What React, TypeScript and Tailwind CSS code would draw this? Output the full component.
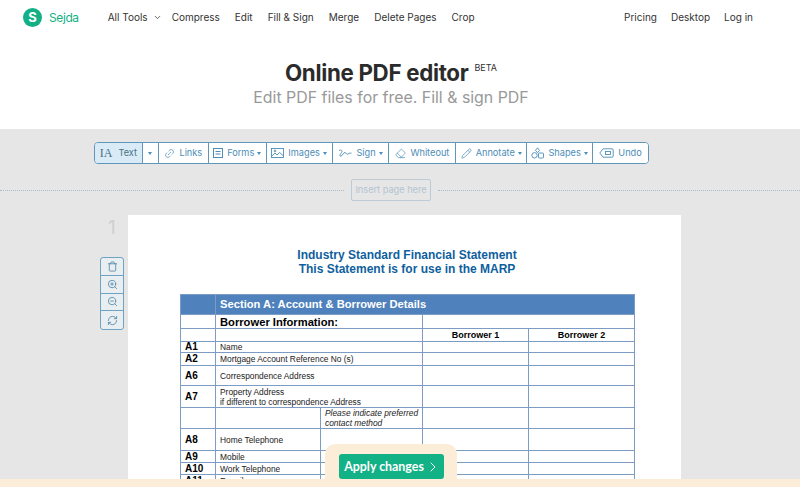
import { ChevronDown, ChevronRight, Eraser, Link2, Pencil, RefreshCw, Trash, ZoomIn, ZoomOut } from 'lucide-react'

const navLinks = ['Compress', 'Edit', 'Fill & Sign', 'Merge', 'Delete Pages', 'Crop']

function Caret() {
  return <span className="ml-[3px] inline-block h-0 w-0 border-x-[2.5px] border-t-[3px] border-x-transparent border-t-current align-middle" />
}

function ToolButton({ w, children, active }: { w: string; children: React.ReactNode; active?: boolean }) {
  return (
    <div className={`flex h-full items-center justify-center gap-[4px] border-r border-[#5f97ba] last:border-r-0 ${w} ${active ? 'bg-[#d9ebf6] text-[#4a6f86]' : 'bg-white text-[#4c8db8]'}`}>
      {children}
    </div>
  )
}

function FormsIcon() {
  return (
    <svg viewBox="0 0 10 10" className="h-[10px] w-[10px]" fill="none" stroke="currentColor" strokeWidth="1">
      <rect x="0.5" y="0.5" width="9" height="9" />
      <path d="M2.5 3.5h5M2.5 6h5" />
    </svg>
  )
}

function ImagesIcon() {
  return (
    <svg viewBox="0 0 13 10" className="h-[10px] w-[13px]" fill="none" stroke="currentColor" strokeWidth="0.9">
      <rect x="0.5" y="0.5" width="12" height="9" />
      <path d="M1 8l3-3 2 2 2.5-2.5L12 7.5" />
      <circle cx="4" cy="3" r="0.9" />
    </svg>
  )
}

function SignIcon() {
  return (
    <svg viewBox="0 0 14 9" className="h-[9px] w-[14px]" fill="none" stroke="currentColor" strokeWidth="0.9">
      <path d="M1 1.5C3 .5 5 1.5 3.5 3.5S1 7.5 3 7c2-.5 2.500-4 4-3.500S8.500 6 10 5s2-1 3.500-.8" />
    </svg>
  )
}

function ShapesIcon() {
  return (
    <svg viewBox="0 0 13 12" className="h-[12px] w-[13px]" fill="none" stroke="currentColor" strokeWidth="0.9">
      <path d="M6.500 .8l2 2.600-2 2.300-2-2.300z" />
      <circle cx="3.500" cy="8.300" r="2.700" />
      <rect x="7.500" y="6" width="5" height="5" rx="0.8" />
    </svg>
  )
}

function UndoIcon() {
  return (
    <svg viewBox="0 0 15 10" className="h-[10px] w-[15px]" fill="none" stroke="currentColor" strokeWidth="0.9">
      <path d="M4 .8h9a1.200 1.200 0 0 1 1.200 1.200v6a1.200 1.200 0 0 1-1.200 1.200H4L.8 5z" />
      <rect x="6.500" y="3.500" width="5" height="3" />
    </svg>
  )
}

function Toolbar() {
  const icon = 'h-[11px] w-[11px] stroke-[1.5]'
  return (
    <div className="ml-[94px] flex h-[22px] w-[555px] overflow-hidden rounded-[4px] border border-[#5f97ba] text-[9.2px]">
      <ToolButton w="w-[48px]" active>
        <span className="font-['Liberation_Serif',serif] text-[12px] leading-none">IA</span>
        <span className="ml-[2px]">Text</span>
      </ToolButton>
      <ToolButton w="w-[16px]"><span className="-ml-[3px] flex"><Caret /></span></ToolButton>
      <ToolButton w="w-[50px]"><Link2 className={`${icon} -rotate-45`} />Links</ToolButton>
      <ToolButton w="w-[58px]"><FormsIcon /><span>Forms<Caret /></span></ToolButton>
      <ToolButton w="w-[66px]"><ImagesIcon /><span>Images<Caret /></span></ToolButton>
      <ToolButton w="w-[57px]"><SignIcon /><span>Sign<Caret /></span></ToolButton>
      <ToolButton w="w-[67px]"><Eraser className={icon} />Whiteout</ToolButton>
      <ToolButton w="w-[71px]"><Pencil className={icon} /><span>Annotate<Caret /></span></ToolButton>
      <ToolButton w="w-[66px]"><ShapesIcon /><span>Shapes<Caret /></span></ToolButton>
      <ToolButton w="w-[55px]"><UndoIcon />Undo</ToolButton>
    </div>
  )
}

function SideButtons() {
  const row = 'flex h-[18px] items-center justify-center border-b border-[#6fa3c4] last:border-b-0 text-[#5e8fae]'
  return (
    <div className="mt-[16px] flex h-[73px] w-[24px] flex-col overflow-hidden rounded-[3px] border border-[#6fa3c4] bg-[#e9eef1]">
      <div className={row}><Trash className="h-[11px] w-[11px]" /></div>
      <div className={row}><ZoomIn className="h-[11px] w-[11px]" /></div>
      <div className={row}><ZoomOut className="h-[11px] w-[11px]" /></div>
      <div className={row}><RefreshCw className="h-[11px] w-[11px]" /></div>
    </div>
  )
}

const cell = 'border border-[#7d9cc4] align-middle p-0'
const codeCell = `${cell} pl-[4px] text-[10px] font-bold leading-[10px]`
const labelCell = `${cell} pl-[4px] text-[8.4px] leading-[10px] text-[#222]`

function Row({ h, code, label }: { h: string; code?: string; label?: React.ReactNode }) {
  return (
    <tr className={h}>
      <td className={codeCell}>{code}</td>
      <td className={labelCell} colSpan={2}>{label}</td>
      <td className={cell}></td>
      <td className={cell}></td>
    </tr>
  )
}

function FormTable() {
  return (
    <table className="ml-[52px] mt-[18px] w-[454px] table-fixed border-collapse font-['Liberation_Sans',sans-serif] text-black">
      <colgroup>
        <col className="w-[35px]" />
        <col className="w-[105px]" />
        <col className="w-[102px]" />
        <col className="w-[106px]" />
        <col className="w-[106px]" />
      </colgroup>
      <tbody>
        <tr className="h-[20px] bg-[#4f81bd]">
          <td className="border border-[#7d9cc4]"></td>
          <td colSpan={4} className="border border-[#7d9cc4] pb-[1px] pl-[4px] text-[11.2px] font-bold leading-[13px] text-white">Section A: Account &amp; Borrower Details</td>
        </tr>
        <tr className="h-[14px]">
          <td className={cell}></td>
          <td colSpan={2} className={`${cell} pl-[4px] text-[11.2px] font-bold leading-[12px]`}>Borrower Information:</td>
          <td colSpan={2} className={cell}></td>
        </tr>
        <tr className="h-[13px]">
          <td className={cell}></td>
          <td colSpan={2} className={cell}></td>
          <td className={`${cell} text-center text-[9px] font-bold leading-[11px]`}>Borrower 1</td>
          <td className={`${cell} text-center text-[9px] font-bold leading-[11px]`}>Borrower 2</td>
        </tr>
        <Row h="h-[11px]" code="A1" label="Name" />
        <Row h="h-[13px]" code="A2" label="Mortgage Account Reference No (s)" />
        <Row h="h-[20px]" code="A6" label="Correspondence Address" />
        <Row h="h-[22px]" code="A7" label={<>Property Address<br />if different to correspondence Address</>} />
        <tr className="h-[21px]">
          <td className={cell}></td>
          <td className={cell}></td>
          <td className={`${cell} pl-[4px] text-[8.4px] italic leading-[10px] text-[#222]`}>Please indicate preferred contact method</td>
          <td className={cell}></td>
          <td className={cell}></td>
        </tr>
        {[
          ['h-[22px]', 'A8', 'Home Telephone'],
          ['h-[12px]', 'A9', 'Mobile'],
          ['h-[12px]', 'A10', 'Work Telephone'],
          ['h-[12px]', 'A11', 'E-mail'],
        ].map(([h, code, label]) => (
          <tr key={code} className={h}>
            <td className={codeCell}>{code}</td>
            <td className={labelCell}>{label}</td>
            <td className={cell}></td>
            <td className={cell}></td>
            <td className={cell}></td>
          </tr>
        ))}
      </tbody>
    </table>
  )
}

export default function App() {
  return (
    <div className="relative h-[487px] w-[800px] overflow-hidden bg-[#e6e6e6] font-['Inter',sans-serif]">
      <header className="h-[129px] bg-white">
        <nav className="flex h-[35px] items-center pl-[23px] pr-[47px] text-[10px] text-[#333]">
          <div className="flex h-[19px] w-[19px] items-center justify-center rounded-full bg-[#14b085] text-[13px] font-bold text-white">S</div>
          <span className="ml-[7px] text-[12px] tracking-[-0.4px] text-[#14b085]">Sejda</span>
          <div className="ml-[29px] flex items-center gap-[15px]">
            <span className="-mr-[5px] flex items-center">All Tools<ChevronDown className="ml-[5px] h-[9px] w-[9px]" /></span>
            {navLinks.map(l => <span key={l}>{l}</span>)}
          </div>
          <div className="ml-auto flex gap-[14px]">
            <span>Pricing</span>
            <span>Desktop</span>
            <span>Log in</span>
          </div>
        </nav>
        <div className="mt-[23px] flex justify-center pr-[18px]">
          <h1 className="text-[22.3px] font-bold leading-[30px] tracking-[-0.3px] text-[#2b2b2b]">Online PDF editor</h1>
          <sup className="ml-[6px] mt-[9px] text-[9px] leading-none text-[#333]">BETA</sup>
        </div>
        <p className="pr-[18px] text-center text-[15.9px] leading-[20px] text-[#999]">Edit PDF files for free. Fill &amp; sign PDF</p>
      </header>

      <main className="pt-[13px]">
        <Toolbar />
        <div className="mt-[15px] flex items-center">
          <div className="h-0 w-[344px] border-t border-dotted border-[#a9bccb]" />
          <div className="mx-[7px] flex h-[22px] w-[80px] items-center justify-center rounded-[2px] border border-[#bccbd6] text-[9.2px] text-[#b3c5d2]">Insert page here</div>
          <div className="h-0 flex-1 border-t border-dotted border-[#a9bccb]" />
        </div>
        <div className="mt-[14px] flex pl-[100px]">
          <div className="w-[28px]">
            <div className="pl-[8px] text-[19px] leading-[26px] text-[#cfcfcf]">1</div>
            <SideButtons />
          </div>
          <div className="h-[300px] w-[553px] bg-white">
            <div className="pl-[5px] pt-[33px] text-center font-['Liberation_Sans',sans-serif] text-[12px] font-bold leading-[14px] text-[#0f5f9e]">
              <div>Industry Standard Financial Statement</div>
              <div>This Statement is for use in the MARP</div>
            </div>
            <FormTable />
          </div>
        </div>
      </main>

      <div className="absolute inset-x-0 bottom-0 h-[8px] bg-[#fcedd8]" />
      <div className="absolute bottom-0 left-[325px] flex h-[43px] w-[132px] justify-center rounded-t-[10px] bg-[#fcedd8] pt-[10px]">
        <div className="flex h-[25px] w-[105px] items-center justify-center gap-[1px] rounded-[3px] bg-[#13b186] pl-[3px] pt-[1px] font-['Lato',sans-serif] text-[12.4px] font-bold text-white">
          Apply changes<ChevronRight className="h-[16px] w-[16px] stroke-[1.5]" />
        </div>
      </div>
    </div>
  )
}
